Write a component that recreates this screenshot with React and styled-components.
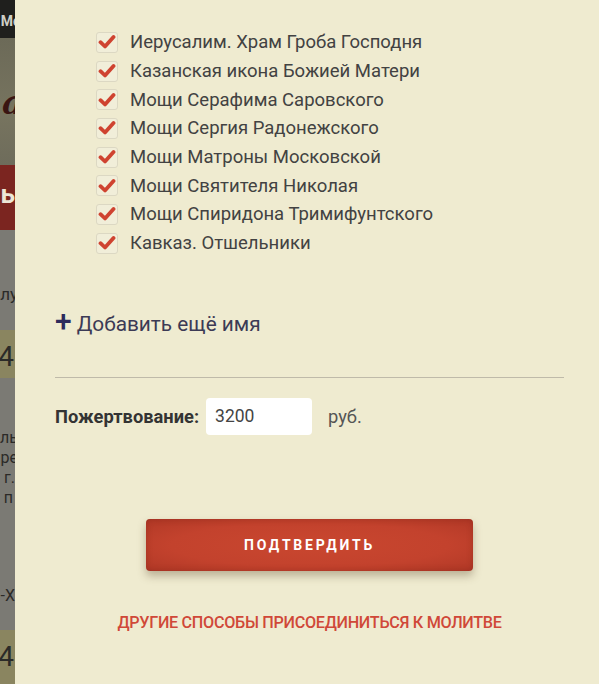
import React from "react";
import styled, { createGlobalStyle } from "styled-components";

const Global = createGlobalStyle`
  html, body { margin: 0; padding: 0; background: #efebd0; }
  body { font-family: Roboto, "Liberation Sans", sans-serif; }
  * { box-sizing: border-box; }
`;

const Page = styled.div`
  display: flex;
  width: 599px;
  height: 684px;
  overflow: hidden;
`;

const Strip = styled.div`
  width: 15px;
  flex: none;
  display: flex;
  flex-direction: column;
  overflow: hidden;
  background: #7a7973;
`;

const StripBlock = styled.div`
  height: ${(p) => p.$h}px;
  flex: none;
  background: ${(p) => p.$bg};
  color: ${(p) => p.$color || "#2b2a28"};
  font-size: ${(p) => p.$fs || 16}px;
  font-family: ${(p) => p.$serif ? '"DejaVu Serif", serif' : 'Roboto, "Liberation Sans", sans-serif'};
  font-weight: ${(p) => p.$fw || 400};
  font-style: ${(p) => p.$italic ? "italic" : "normal"};
  display: flex;
  flex-direction: column;
  align-items: flex-end;
  justify-content: flex-start;
  padding-top: ${(p) => p.$pt || 0}px;
  line-height: ${(p) => p.$lh || 20}px;
  white-space: nowrap;
  overflow: hidden;
`;

const StripText = styled.span`
  margin-right: ${(p) => p.$mr || 0}px;
  margin-top: ${(p) => p.$mt || 0}px;
`;

const Panel = styled.div`
  flex: 1;
  background: #efebd0;
  padding: 0 35px 0 40px;
  display: flex;
  flex-direction: column;
`;

const List = styled.ul`
  list-style: none;
  margin: 28px 0 0 41px;
  padding: 0;
`;

const Row = styled.li`
  height: 28.7px;
  display: flex;
  align-items: center;
  gap: 12px;
  font-size: 18.5px;
  color: #424242;
`;

const Box = styled.span`
  width: 22px;
  height: 21px;
  flex: none;
  border: 1px solid #dcd8c3;
  border-radius: 3px;
  background: #f1eed9;
  display: flex;
  align-items: center;
  justify-content: center;
`;

const AddRow = styled.div`
  margin-top: 53px;
  display: flex;
  align-items: center;
  gap: 5px;
  height: 26px;
  font-size: 20.8px;
  color: #3c3a55;
`;

const Plus = styled.span`
  font-size: 30px;
  font-weight: 500;
  color: #2d2b5c;
  line-height: 26px;
  margin-top: -5px;
`;

const Divider = styled.hr`
  margin: 40px 0 0;
  border: none;
  border-top: 1px solid #bfbaa9;
  height: 0;
`;

const DonationRow = styled.div`
  margin-top: 20px;
  display: flex;
  align-items: center;
`;

const Label = styled.span`
  font-size: 18.3px;
  font-weight: 700;
  color: #333;
  margin-right: 7px;
`;

const Amount = styled.div`
  width: 106px;
  height: 37px;
  background: #fff;
  border-radius: 4px;
  padding: 0 9px;
  display: flex;
  align-items: center;
  font-size: 17.5px;
  color: #444;
`;

const Currency = styled.span`
  margin-left: 16px;
  font-size: 18.3px;
  color: #555;
`;

const Confirm = styled.button`
  align-self: center;
  margin-top: 84px;
  width: 327px;
  height: 52px;
  border: none;
  border-radius: 4px;
  background: radial-gradient(ellipse at center, #c9472f 0%, #c3422d 60%, #b03826 100%);
  box-shadow: 0 5px 8px rgba(90, 70, 40, 0.35), inset 0 0 6px rgba(120, 30, 20, 0.35);
  color: #fff;
  font-family: Roboto, "Liberation Sans", sans-serif;
  font-size: 14px;
  font-weight: 700;
  letter-spacing: 2.8px;
  text-transform: uppercase;
  cursor: pointer;
`;

const OtherWays = styled.a`
  align-self: center;
  margin-top: 42px;
  font-size: 16.2px;
  font-weight: 500;
  line-height: 20px;
  letter-spacing: -0.3px;
  color: #d04838;
  text-transform: uppercase;
  text-decoration: none;
`;

const Check = () => (
  <svg width="18" height="16" viewBox="0 0 18 16">
    <path d="M2.5 8.2 L7 12.5 L15.5 3" fill="none" stroke="#cf4330" strokeWidth="3.8" strokeLinecap="round" strokeLinejoin="round" />
  </svg>
);

const items = [
  "Иерусалим. Храм Гроба Господня",
  "Казанская икона Божией Матери",
  "Мощи Серафима Саровского",
  "Мощи Сергия Радонежского",
  "Мощи Матроны Московской",
  "Мощи Святителя Николая",
  "Мощи Спиридона Тримифунтского",
  "Кавказ. Отшельники",
];

export default function App() {
  return (
    <>
      <Global />
      <Page>
        <Strip>
          <StripBlock $h={38} $bg="#1f1f1d" $color="#cfcfc8" $fs={14} $fw={700} $pt={11}>
            <StripText $mr={-6}>Мо</StripText>
          </StripBlock>
          <StripBlock $h={127} $bg="linear-gradient(180deg,#6c6a58,#77745f 60%,#6e6c5b)" $color="#3a1512" $fs={34} $serif $italic $fw={700} $pt={44} $lh={40}>
            <StripText $mr={-9}>а</StripText>
          </StripBlock>
          <StripBlock $h={65} $bg="#7b2520" $color="#ece6d6" $fs={26} $fw={700} $pt={14} $lh={30}>
            <StripText>ь</StripText>
          </StripBlock>
          <StripBlock $h={100} $bg="#7b7a74" $fs={17} $pt={54}>
            <StripText $mr={-3}>лу</StripText>
          </StripBlock>
          <StripBlock $h={48} $bg="#8a8560" $fs={28} $pt={12} $lh={30}>
            <StripText $mr={1}>4</StripText>
          </StripBlock>
          <StripBlock $h={252} $bg="#7b7a74" $fs={16} $pt={50} $lh={20}>
            <StripText $mr={-3}>ль</StripText>
            <StripText $mr={-3}>ре</StripText>
            <StripText>г.</StripText>
            <StripText $mr={2}>п</StripText>
            <StripText $mt={78}>-Х</StripText>
          </StripBlock>
          <StripBlock $h={54} $bg="#8a8560" $fs={28} $pt={12} $lh={30}>
            <StripText $mr={1}>4</StripText>
          </StripBlock>
        </Strip>
        <Panel>
          <List>
            {items.map((t) => (
              <Row key={t}>
                <Box>
                  <Check />
                </Box>
                {t}
              </Row>
            ))}
          </List>
          <AddRow>
            <Plus>+</Plus>
            Добавить ещё имя
          </AddRow>
          <Divider />
          <DonationRow>
            <Label>Пожертвование:</Label>
            <Amount>3200</Amount>
            <Currency>руб.</Currency>
          </DonationRow>
          <Confirm>Подтвердить</Confirm>
          <OtherWays href="#">Другие способы присоединиться к молитве</OtherWays>
        </Panel>
      </Page>
    </>
  );
}
